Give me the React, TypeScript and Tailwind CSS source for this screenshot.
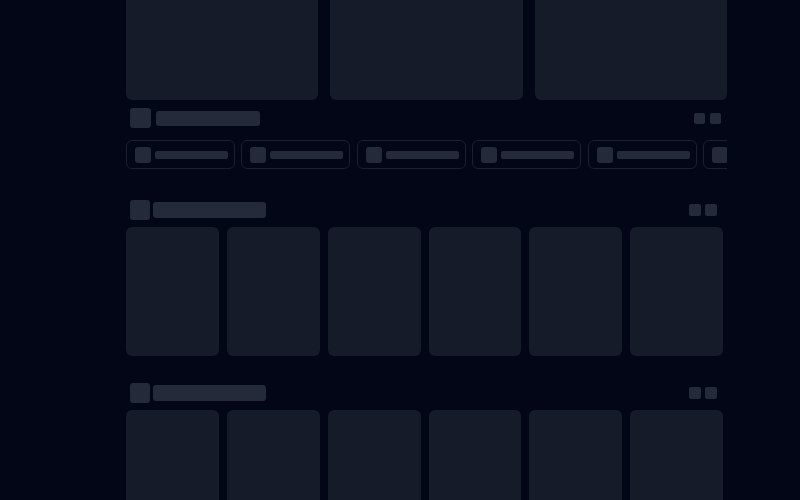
const chips = [0, 1, 2, 3, 4, 5];
const cards = [0, 1, 2, 3, 4, 5];

const SectionHeader = () => (
  <div className="flex h-[20px] items-center justify-between pl-1 pr-[6px]">
    <div className="flex items-center gap-[3px]">
      <div className="h-[20px] w-[20px] rounded-[3px] bg-[#242a3a]" />
      <div className="h-[16px] w-[113px] rounded-[3px] bg-[#242a3a]" />
    </div>
    <div className="flex gap-[4px]">
      <div className="h-[12px] w-[12px] rounded-[2px] bg-[#242a3a]" />
      <div className="h-[12px] w-[12px] rounded-[2px] bg-[#242a3a]" />
    </div>
  </div>
);

const CardRow = () => (
  <div className="mt-[7px] grid grid-cols-6 gap-2">
    {cards.map((c) => (
      <div key={c} className="h-[129px] rounded-md bg-[#161b2a]" />
    ))}
  </div>
);

export default function App() {
  return (
    <div className="h-[500px] w-[800px] overflow-hidden bg-[#020617]">
      <div className="-mt-[20px] ml-[126px] w-[601px]">
        {/* featured row */}
        <div className="grid grid-cols-3 gap-3">
          <div className="h-[120px] rounded-md bg-[#161b2a]" />
          <div className="h-[120px] rounded-md bg-[#161b2a]" />
          <div className="h-[120px] rounded-md bg-[#161b2a]" />
        </div>

        <div className="mt-[8px] flex h-[20px] items-center justify-between pl-1 pr-[6px]">
          <div className="flex items-center gap-[5px]">
            <div className="h-[20px] w-[21px] rounded-[3px] bg-[#242a3a]" />
            <div className="h-[15px] w-[104px] rounded-[3px] bg-[#242a3a]" />
          </div>
          <div className="flex gap-[5px]">
            <div className="h-[11px] w-[11px] rounded-[2px] bg-[#242a3a]" />
            <div className="h-[11px] w-[11px] rounded-[2px] bg-[#242a3a]" />
          </div>
        </div>

        {/* category chips */}
        <div className="mt-[12px] flex gap-[6.4px] overflow-hidden">
          {chips.map((c) => (
            <div
              key={c}
              className="flex h-[29px] w-[109px] shrink-0 items-center gap-[4px] rounded-md border border-[#1a2030] pl-[8px]"
            >
              <div className="h-[16px] w-[16px] rounded-[3px] bg-[#242a3a]" />
              <div className="h-[8px] w-[73px] rounded-[2px] bg-[#242a3a]" />
            </div>
          ))}
        </div>

        <div className="w-[597px]">
          <div className="mt-[31px]">
            <SectionHeader />
            <CardRow />
          </div>
          <div className="mt-[27px]">
            <SectionHeader />
            <CardRow />
          </div>
        </div>
      </div>
    </div>
  );
}
